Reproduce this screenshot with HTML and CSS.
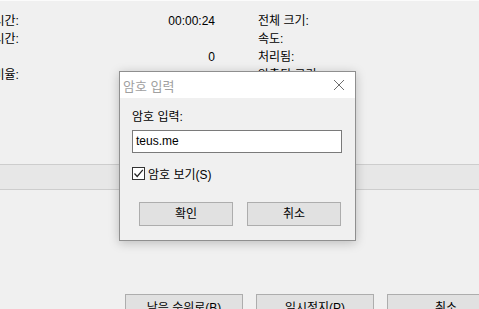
FILE: index.html
```html
<!DOCTYPE html>
<html>
  <head>
    <link rel="stylesheet" href="styles.css">
  </head>
  <body>
    <div class="window">
      <div class="stats">
        <span class="label">경과 시간:</span>
        <span class="value">00:00:24</span>
        <span class="label right">전체 크기:</span>

        <span class="label">남은 시간:</span>
        <span class="value"></span>
        <span class="label right">속도:</span>

        <span class="label"></span>
        <span class="value">0</span>
        <span class="label right">처리됨:</span>

        <span class="label">압축 비율:</span>
        <span class="value"></span>
        <span class="label right">압축된 크기:</span>
      </div>

      <div class="band"></div>

      <div class="actions">
        <button class="btn wide">낮은 순위로(B)</button>
        <button class="btn wide">일시정지(P)</button>
        <button class="btn wide">취소</button>
      </div>
    </div>

    <!-- password prompt sits over the progress window -->
    <div class="dialog">
      <div class="dialog-title">
        <span>암호 입력</span>
        <svg class="close" width="12" height="12" viewBox="0 0 12 12">
          <path d="M1 1 L11 11 M11 1 L1 11" stroke="#6d6d6d" stroke-width="1" fill="none"/>
        </svg>
      </div>
      <div class="dialog-body">
        <p class="prompt">암호 입력:</p>
        <div class="field">teus.me</div>
        <label class="check">
          <span class="box">
            <svg width="11" height="11" viewBox="0 0 11 11">
              <path d="M1.5 5.5 L4.2 8.5 L9.8 1.8" stroke="#222" stroke-width="1.2" fill="none"/>
            </svg>
          </span>
          암호 보기(S)
        </label>
        <div class="dialog-buttons">
          <button class="btn">확인</button>
          <button class="btn">취소</button>
        </div>
      </div>
    </div>
  </body>
</html>
```

FILE: styles.css
```css
html, body {
  margin: 0;
  width: 479px;
  height: 309px;
  overflow: hidden;
}
body {
  background-color: #f0f0f0;
  font-family: "Liberation Sans", "Noto Sans CJK KR", sans-serif;
  font-size: 12px;
  color: #000;
  position: relative;
}
.window {
  border-top: 1px solid #fbfbfb;
}
.stats {
  display: grid;
  grid-template-columns: 120px 127px 1fr;
  grid-auto-rows: 18px;
  margin-left: -32px;
  padding-top: 11px;
  line-height: 18px;
  white-space: nowrap;
}
.value {
  text-align: right;
}
.label.right {
  padding-left: 43px;
}
.band {
  margin-top: 80px;
  height: 24px;
  background-color: #e7e7e7;
  border-top: 1px solid #cdcdcd;
  border-bottom: 1px solid #cdcdcd;
}
.actions {
  display: flex;
  gap: 13px;
  margin-top: 104px;
  padding-left: 125px;
}
.btn {
  font-family: "Liberation Sans", "Noto Sans CJK KR", sans-serif;
  font-size: 12px;
  color: #000;
  background-color: #e1e1e1;
  border: 1px solid #adadad;
  width: 94px;
  height: 24px;
  padding: 0;
  line-height: 20px;
  flex: none;
}
.btn.wide {
  width: 118px;
  padding-top: 3px;
}
.dialog {
  position: absolute;
  left: 119px;
  top: 71px;
  width: 237px;
  height: 170px;
  box-sizing: border-box;
  border: 1px solid #8f8f8f;
  background-color: #f0f0f0;
  box-shadow: 0 2px 10px rgba(0, 0, 0, 0.22);
}
.dialog-title {
  height: 26px;
  background-color: #fff;
  display: flex;
  align-items: center;
  justify-content: space-between;
  padding: 0 10px 0 3px;
  color: #a0a0a0;
  font-size: 13px;
}
.dialog-body {
  padding: 11px 12px 0 12px;
}
.prompt {
  margin: 0;
  line-height: 16px;
}
.field {
  margin-top: 5px;
  width: 210px;
  height: 23px;
  box-sizing: border-box;
  border: 1px solid #7a7a7a;
  background-color: #fff;
  padding-left: 3px;
  line-height: 20px;
}
.check {
  display: flex;
  align-items: center;
  gap: 3px;
  margin-top: 13px;
  height: 15px;
}
.box {
  width: 13px;
  height: 13px;
  box-sizing: border-box;
  border: 1px solid #333;
  background-color: #fff;
  display: flex;
  align-items: center;
  justify-content: center;
}
.dialog-buttons {
  display: flex;
  gap: 14px;
  margin-top: 21px;
  padding-left: 7px;
}
```
